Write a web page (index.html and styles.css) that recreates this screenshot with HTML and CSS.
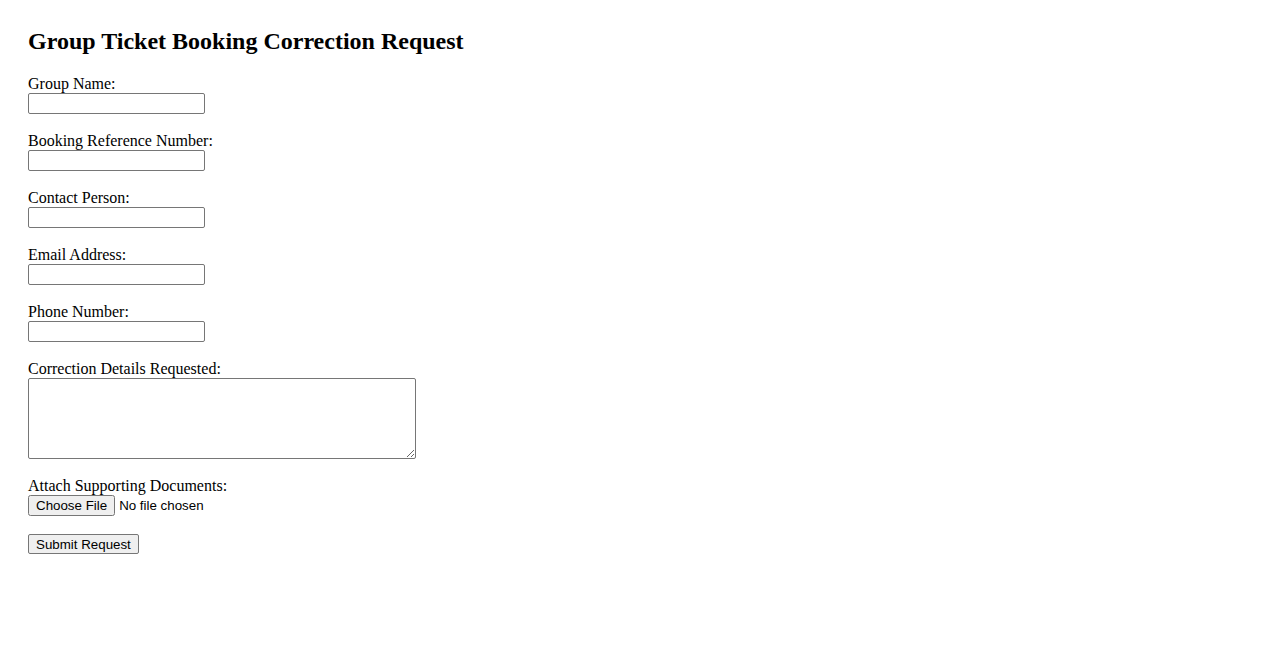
FILE: index.html
```html
<!DOCTYPE html>
<html>
<head>
<meta charset="utf-8">
<title>Group Ticket Booking Correction Request</title>
<link rel="stylesheet" href="styles.css">
</head>
<body>
<div class="page">
  <h2 class="title">Group Ticket Booking Correction Request</h2>
  <form class="form">
    <div class="field">
      <label class="label" for="group">Group Name:</label>
      <input class="text" type="text" id="group">
    </div>
    <div class="field">
      <label class="label" for="ref">Booking Reference Number:</label>
      <input class="text" type="text" id="ref">
    </div>
    <div class="field">
      <label class="label" for="contact">Contact Person:</label>
      <input class="text" type="text" id="contact">
    </div>
    <div class="field">
      <label class="label" for="email">Email Address:</label>
      <input class="text" type="email" id="email">
    </div>
    <div class="field">
      <label class="label" for="phone">Phone Number:</label>
      <input class="text" type="tel" id="phone">
    </div>
    <div class="field">
      <label class="label" for="details">Correction Details Requested:</label>
      <textarea class="area" id="details"></textarea>
    </div>
    <div class="field">
      <label class="label" for="docs">Attach Supporting Documents:</label>
      <input class="file" type="file" id="docs">
    </div>
    <div class="field">
      <button class="btn" type="submit">Submit Request</button>
    </div>
  </form>
</div>
</body>
</html>
```
FILE: styles.css
```css
html, body {
  margin: 0;
  padding: 0;
  background: #fff;
}
body {
  font-family: "Liberation Serif", "Times New Roman", serif;
  font-size: 16px;
  color: #000;
}
.page {
  padding: 20px 28px;
}
.title {
  font-size: 24px;
  font-weight: bold;
  margin: 7px 0 20px;
  line-height: 28px;
}
.form {
  display: flex;
  flex-direction: column;
  gap: 18px;
}
.field {
  display: flex;
  flex-direction: column;
  align-items: flex-start;
}
.label {
  line-height: 18px;
}
.text {
  box-sizing: border-box;
  width: 177px;
  height: 21px;
  margin: 0;
  border: 1px solid #767676;
  border-radius: 2px;
  padding: 1px 2px;
  font-family: "Liberation Sans", Arial, sans-serif;
  font-size: 13.33px;
}
.area {
  box-sizing: border-box;
  width: 388px;
  height: 81px;
  margin: 0;
  border: 1px solid #767676;
  border-radius: 2px;
  font-family: "Liberation Mono", monospace;
  font-size: 13.33px;
}
.file {
  margin: 0;
  font-family: "Liberation Sans", Arial, sans-serif;
  font-size: 13.33px;
}
.btn {
  margin: 0;
  height: 20px;
  padding: 1px 7px;
  border: 1px solid #767676;
  border-radius: 2px;
  background: #efefef;
  font-family: "Liberation Sans", Arial, sans-serif;
  font-size: 13.33px;
  color: #000;
}
```
